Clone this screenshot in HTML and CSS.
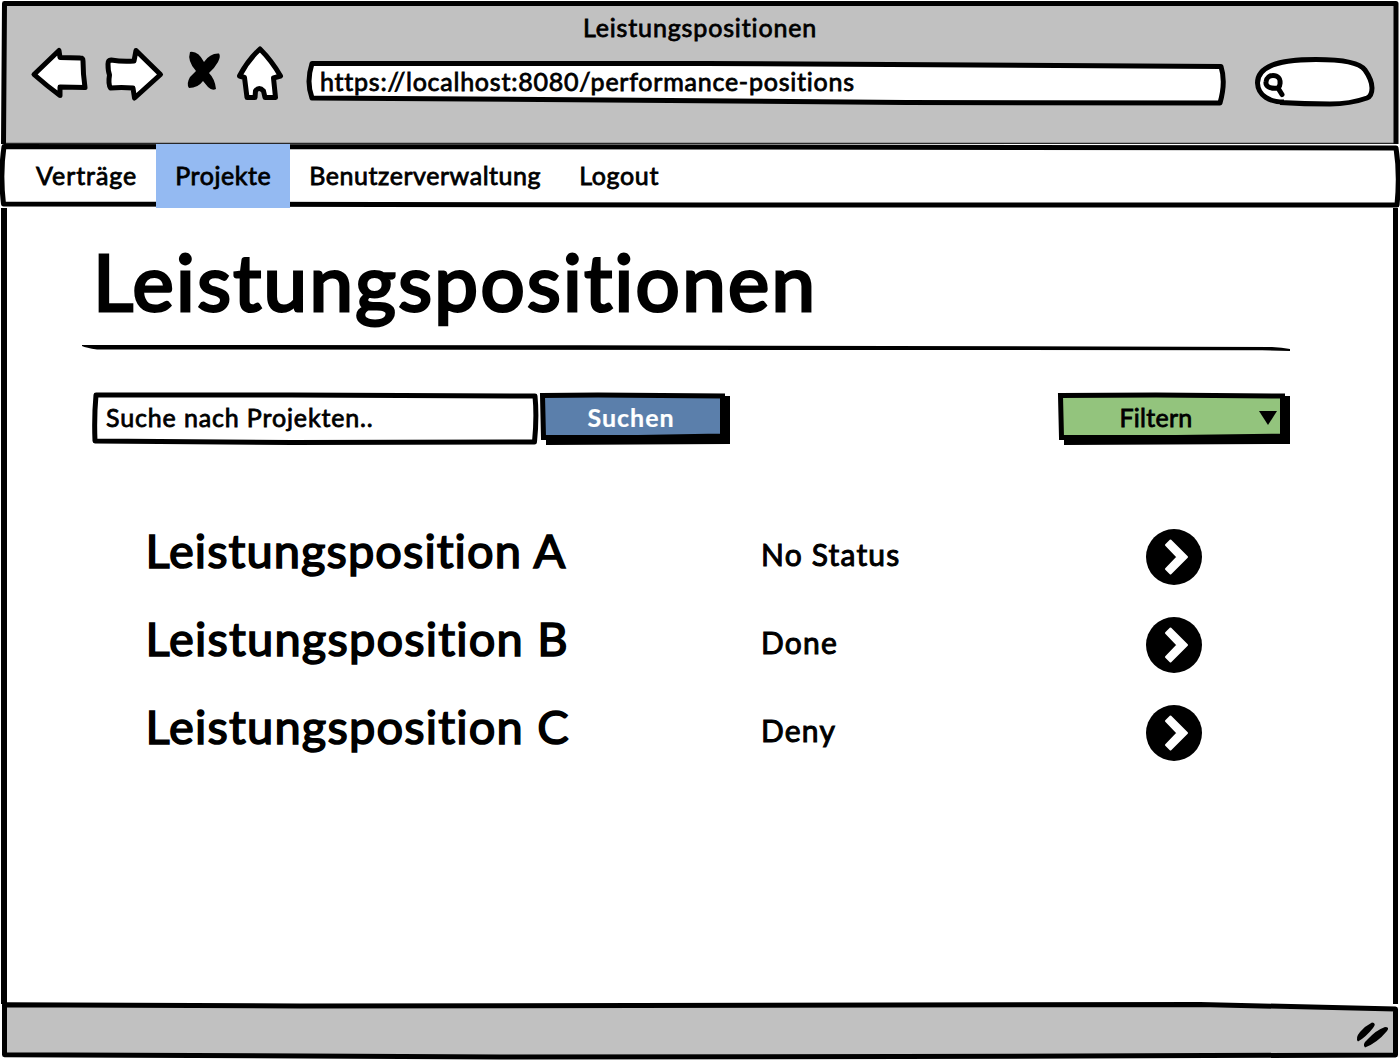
FILE: index.html
```html
<!DOCTYPE html>
<html lang="de">
<head>
<meta charset="utf-8">
<title>Leistungspositionen</title>
<link rel="stylesheet" href="styles.css">
</head>
<body>
<div class="window">
  <header class="chrome">
    <svg class="sketch" viewBox="0 0 1400 144">
      <path fill="#c1c1c1" d="M4 4H1396V144H4z"/>
      <path class="line" d="M3.500 144L4.500 3.500H1396V144"/>
      <path stroke="#000" stroke-width="1" d="M4 143.300H1396"/>
    </svg>
    <div class="chrome-title">Leistungspositionen</div>
    <div class="toolbar">
      <svg class="tools" viewBox="0 0 260 60" width="260" height="60">
        <g class="shape">
          <path d="M5 30.500L30 6.500L31 13.500L51.500 14Q54 14 54 17Q54 30 56 43.500L31 43V51.500Q18 42 5 30.500z"/>
          <path d="M79 20Q79 16 82 16Q94 18 105 17L107 6.500L131.500 30.500L105.500 54L104 44Q92 43 81.500 44Q79 40 80.500 31Q79 27 79 20z"/>
          <path d="M231 5Q243 17 251.500 32L244.500 34L246.500 53.500H236L234.500 47Q230 42 226.500 47L226 53.500H218L215.500 33.500L210.500 32Q219 16 231 5z"/>
        </g>
        <path d="M161 8Q169 6.500 175 18Q181 9 190 9.500Q192 12 189 18Q185 25 180 29Q186 35 187 45Q183 47 179 43L174 37Q169 44 160 44Q157 40 161 33L167 27Q158 17 161 8z"/>
      </svg>
      <div class="address">
        <svg class="sketch" viewBox="0 0 920 48">
          <path class="line box" d="M6 5.500L400 5.500L915 8.500Q920 24 914 45L600 44.500L300 42L6 40Q0 24 6 5.500z"/>
        </svg>
        <span>https://localhost:8080/performance-positions</span>
      </div>
      <svg class="search-pill" viewBox="0 0 124 54" width="124" height="54">
        <path class="line box" d="M30 47C16 47 4 41 3.500 28C3.500 12 22 4.500 62 4.500C88 4.500 106 8 111 15Q118 25 118 33Q118 41 113 43Q96 49 76 49Q50 49 26 47.500"/>
        <path class="lens" d="M24 33C15 34 11.500 31 12 27C12.500 22 16 20.500 19 20.500C24 20.500 26.500 24 26 27C26.500 30 25 32 24 33L28 39.500"/>
      </svg>
    </div>
  </header>

  <nav class="menu">
    <svg class="sketch" viewBox="0 0 1400 64">
      <path fill="#fff" d="M0 1H1400V63H0z"/>
      <path class="line" d="M4 2.500L700 3L1396 4Q1400 30 1397 61L700 61L3.500 60Q0 30 4 2.500z"/>
    </svg>
    <a class="item contracts">Verträge</a>
    <a class="item active">Projekte</a>
    <a class="item users">Benutzerverwaltung</a>
    <a class="item logout">Logout</a>
  </nav>

  <main class="page">
    <svg class="sketch" viewBox="0 0 1400 796" preserveAspectRatio="none">
      <path class="edge" d="M4 0V796"/><path class="line" d="M1395.500 0V796"/>
    </svg>
    <h1>Leistungspositionen</h1>
    <svg class="rule" viewBox="0 0 1208 8" width="1208" height="8"><path d="M0 0L500 .300L1190 2Q1200 2.500 1208 4V6L1180 5.300L15 4.400Q4 3 0 1z"/></svg>
    <div class="controls">
      <div class="field">
        <svg class="sketch" viewBox="0 0 446 54">
          <path class="line box" d="M4 4L200 4L443 5Q445 26 442.500 51L200 51.500L3 50Q2 26 4 4z"/>
        </svg>
        <span>Suche nach Projekten..</span>
      </div>
      <button class="btn search">
        <svg class="sketch" viewBox="0 0 192 54">
          <path d="M8 46V54L192 53V5H184z"/>
          <path class="line blue" d="M4.500 4.500L60 4L184.500 5V45L100 46.500L5.500 46.500z"/>
        </svg>
        Suchen
      </button>
      <button class="btn filter">
        <svg class="sketch" viewBox="0 0 234 54">
          <path d="M8 46V54L234 53V5H226z"/>
          <path class="line green" d="M4.500 4.500L100 4L226.500 5V45L120 46.500L5.500 46.500z"/>
          <path d="M203 20H221L212 34z"/>
        </svg>
        Filtern
      </button>
    </div>
    <ul class="list">
      <li class="row">
        <span class="name">Leistungsposition A</span><span class="status">No Status</span>
        <svg class="go" viewBox="0 0 56 56" width="56" height="56"><circle cx="28" cy="28" r="28"/><path d="M24.500 11.500L41 28L24.500 44.500L20 40L31.500 28L20 16z"/></svg>
      </li>
      <li class="row">
        <span class="name wide">Leistungsposition B</span><span class="status">Done</span>
        <svg class="go" viewBox="0 0 56 56" width="56" height="56"><circle cx="28" cy="28" r="28"/><path d="M24.500 11.500L41 28L24.500 44.500L20 40L31.500 28L20 16z"/></svg>
      </li>
      <li class="row">
        <span class="name wide">Leistungsposition C</span><span class="status">Deny</span>
        <svg class="go" viewBox="0 0 56 56" width="56" height="56"><circle cx="28" cy="28" r="28"/><path d="M24.500 11.500L41 28L24.500 44.500L20 40L31.500 28L20 16z"/></svg>
      </li>
    </ul>
  </main>

  <footer class="statusbar">
    <svg class="sketch" viewBox="0 4 1400 56">
      <path class="line gray" d="M4.500 4.800L300 6L1200 4.500L1395.500 9V55L900 56.500L500 57L4.500 54.700z"/>
      <path d="M1372 22.500Q1377 23 1373 28Q1366 37 1358 41.500Q1355 38 1360 32Q1365 26 1372 22.500zM1385 27Q1390 27 1387 31Q1377 43 1365 47.500Q1362 44 1367 40Q1376 30 1385 27z"/>
    </svg>
  </footer>
</div>
</body>
</html>
```
FILE: styles.css
```css
* { box-sizing: border-box; }

body {
  margin: 0;
  background: #fff;
  color: #000;
  font-family: Lato, "Open Sans", sans-serif;
  font-size: 25px;
  line-height: 32px;
  font-variant-ligatures: none;
  stroke-linejoin: round;
  -webkit-text-stroke: 0.8px currentColor;
}

.window {
  display: flex;
  flex-direction: column;
  width: 1400px;
  height: 1060px;
  overflow: hidden;
}

/* hand-drawn outline lying behind a box's content */
.sketch {
  position: absolute;
  inset: 0;
  width: 100%;
  height: 100%;
  overflow: visible;
  z-index: -1;
}

.line {
  fill: none;
  stroke: #000;
  stroke-width: 5;
}
.line.box { fill: #fff; }
.line.gray { fill: #c1c1c1; }
.line.blue { fill: #5b7fab; stroke-linejoin: miter; }
.line.green { fill: #93c47d; stroke-linejoin: miter; }
.edge { stroke: #000; stroke-width: 6; }
.lens { fill: none; stroke: #000; stroke-width: 5; stroke-linecap: round; }

.chrome, .menu, .page, .statusbar, .address, .field, .btn {
  position: relative;
  z-index: 0;
}

.chrome { height: 144px; padding-top: 11px; }
.chrome-title { text-align: center; height: 33px; letter-spacing: 0.86px; }
.toolbar { display: flex; align-items: flex-start; padding-left: 29px; }
.shape { fill: #fff; stroke: #000; stroke-width: 5; }
.address {
  width: 920px;
  height: 48px;
  margin: 14px 0 0 17px;
  padding: 7px 0 0 14px;
  letter-spacing: 0.77px;
}
.search-pill { margin: 11px 0 0 28px; }

.menu { display: flex; height: 64px; padding-left: 17px; }
.item { padding: 15px 19px 0; height: 64px; }
.contracts { letter-spacing: 0.95px; }
.active { background: #94baf2; letter-spacing: 0.55px; }
.users { letter-spacing: 0.56px; }
.logout { letter-spacing: 0.65px; }

.page { height: 796px; }
h1 {
  margin: 0;
  padding: 25px 0 0 93px;
  height: 137px;
  font-size: 78px;
  line-height: 96px;
  font-weight: 400;
  letter-spacing: 2.35px;
  -webkit-text-stroke-width: 3px;
}
.rule { display: block; margin-left: 82px; }

.controls { display: flex; padding-left: 92px; margin-top: 38px; }
.field { width: 446px; height: 54px; padding: 10px 0 0 14px; letter-spacing: 0.86px; }
.btn {
  height: 54px;
  border: 0;
  padding: 0 0 2px;
  background: none;
  font: inherit;
  color: inherit;
}
.search { width: 192px; padding-right: 6px; color: #fff; font-weight: 700; letter-spacing: 1px; -webkit-text-stroke-width: 0.2px; }
.filter { width: 234px; margin-left: 326px; padding-right: 34px; letter-spacing: 0.3px; }

.list { list-style: none; margin: 68px 0 0; padding: 0 0 0 145.5px; }
.row { display: flex; align-items: center; height: 88px; }
.name {
  width: 615.5px;
  padding-bottom: 14px;
  font-size: 47px;
  letter-spacing: 1.05px;
  -webkit-text-stroke-width: 1.6px;
}
.name.wide { letter-spacing: 1.17px; }
.status { width: 384.5px; padding-bottom: 7px; font-size: 30px; letter-spacing: 1.2px; -webkit-text-stroke-width: 1px; }
.go path { fill: #fff; stroke: #fff; stroke-width: 2; }

.statusbar { height: 56px; }
```
